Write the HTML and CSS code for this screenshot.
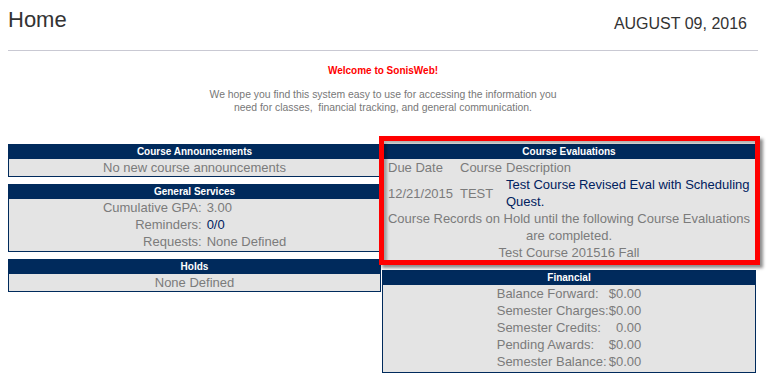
FILE: index.html
```html
<!DOCTYPE html>
<html lang="en">
<head>
<meta charset="utf-8">
<title>Home</title>
<link rel="stylesheet" href="styles.css">
</head>
<body>
<div class="page">
  <header class="top">
    <h1 class="title">Home</h1>
    <div class="date">AUGUST 09, 2016</div>
  </header>
  <hr class="rule">
  <div class="intro">
    <p class="welcome">Welcome to SonisWeb!</p>
    <p class="blurb">We hope you find this system easy to use for accessing the information you<br>need for classes,&nbsp; financial tracking, and general communication.</p>
  </div>
  <div class="columns">
    <div class="col">
      <section class="panel">
        <h2 class="panel-head">Course Announcements</h2>
        <div class="panel-body center">No new course announcements</div>
      </section>
      <section class="panel">
        <h2 class="panel-head">General Services</h2>
        <div class="panel-body pad-b">
          <table class="kv">
            <tr><td class="k">Cumulative GPA:</td><td class="v">3.00</td></tr>
            <tr><td class="k">Reminders:</td><td class="v link">0/0</td></tr>
            <tr><td class="k">Requests:</td><td class="v">None Defined</td></tr>
          </table>
        </div>
      </section>
      <section class="panel">
        <h2 class="panel-head">Holds</h2>
        <div class="panel-body center">None Defined</div>
      </section>
    </div>
    <div class="col">
      <section class="panel eval">
        <h2 class="panel-head">Course Evaluations</h2>
        <div class="panel-body pad-b">
          <table class="evals">
            <colgroup><col class="c1"><col class="c2"><col class="c3"></colgroup>
            <thead>
              <tr><th class="d">Due Date</th><th class="s">Course</th><th class="s">Description</th></tr>
            </thead>
            <tbody>
              <tr><td class="d">12/21/2015</td><td class="s">TEST</td><td class="s link">Test Course Revised Eval with Scheduling Quest.</td></tr>
            </tbody>
          </table>
          <p class="note">Course Records on Hold until the following Course Evaluations are completed.</p>
          <p class="note">Test Course 201516 Fall</p>
        </div>
        <div class="callout"></div>
      </section>
      <section class="panel">
        <h2 class="panel-head">Financial</h2>
        <div class="panel-body pad-b2">
          <table class="fin">
            <tr><td class="k">Balance Forward:</td><td class="v">$0.00</td></tr>
            <tr><td class="k">Semester Charges:</td><td class="v">$0.00</td></tr>
            <tr><td class="k">Semester Credits:</td><td class="v">0.00</td></tr>
            <tr><td class="k">Pending Awards:</td><td class="v">$0.00</td></tr>
            <tr><td class="k">Semester Balance:</td><td class="v">$0.00</td></tr>
          </table>
        </div>
      </section>
    </div>
  </div>
</div>
</body>
</html>
```
FILE: styles.css
```css
html, body {
  margin: 0;
  padding: 0;
  background: #ffffff;
}

body {
  font-family: "Liberation Sans", Arial, sans-serif;
  color: #333333;
}

.page {
  margin-left: 8px;
  width: 750px;
  padding-top: 7px;
}

.top {
  display: flex;
  justify-content: space-between;
  align-items: flex-start;
  height: 26px;
}

.title {
  margin: 0;
  font-size: 22px;
  line-height: 26px;
  font-weight: normal;
  color: #333333;
}

.date {
  margin-top: 7px;
  margin-right: 11px;
  font-size: 16px;
  line-height: 20px;
  color: #333333;
}

.rule {
  margin: 17px 0 0 0;
  border: 0;
  border-top: 1px solid #c9c9d3;
  height: 0;
}

.intro {
  text-align: center;
  padding-top: 14px;
}

.welcome {
  margin: 0;
  font-size: 10px;
  line-height: 12px;
  font-weight: bold;
  color: #ff0000;
}

.blurb {
  margin: 12px 0 0 0;
  font-size: 10.4px;
  line-height: 12.5px;
  color: #777777;
}

.columns {
  display: grid;
  grid-template-columns: 373px 374px;
  column-gap: 1px;
  margin-top: 30px;
  align-items: start;
}

.col {
  display: flex;
  flex-direction: column;
  gap: 7px;
}

.panel {
  border: 1px solid #002a5c;
  background: #e4e4e4;
}

.panel-head {
  margin: 0;
  background: #002a5c;
  color: #ffffff;
  font-size: 10px;
  line-height: 14px;
  height: 14px;
  font-weight: bold;
  text-align: center;
}

.panel-body {
  font-size: 13px;
  line-height: 17px;
  color: #7b7b7b;
}

.panel-body.center {
  text-align: center;
}

.panel-body.pad-b {
  padding-bottom: 1px;
}

.panel-body.pad-b2 {
  padding-bottom: 2px;
}

.link {
  color: #00215e;
}

.kv,
.fin {
  border-collapse: collapse;
  margin: 0 auto;
}

.kv td,
.fin td {
  padding: 0;
  line-height: 17px;
  font-size: 13px;
}

.kv .k {
  text-align: right;
  padding-right: 5px;
}

.kv .v {
  text-align: left;
}

.kv .v.link {
  color: #00215e;
}

.fin .k {
  text-align: left;
}

.fin .v {
  text-align: right;
}

.eval {
  position: relative;
}

.evals {
  width: 100%;
  border-collapse: collapse;
  table-layout: fixed;
}

.evals .c1 { width: 76px; }
.evals .c2 { width: 46px; }

.evals th,
.evals td {
  font-weight: normal;
  text-align: left;
  vertical-align: middle;
  font-size: 13px;
  line-height: 17px;
  padding: 0;
}

.evals .d {
  padding-left: 5px;
}

.evals .s {
  padding-left: 1px;
}

.evals td.link {
  color: #00215e;
}

.note {
  margin: 0;
  text-align: center;
}

.callout {
  position: absolute;
  left: -4px;
  top: -9px;
  right: -5px;
  bottom: -3px;
  border: 5px solid #ff0000;
  box-shadow: 3px 3px 3px rgba(0, 0, 0, 0.45), inset 3px 3px 3px rgba(0, 0, 0, 0.3);
  pointer-events: none;
}
```
